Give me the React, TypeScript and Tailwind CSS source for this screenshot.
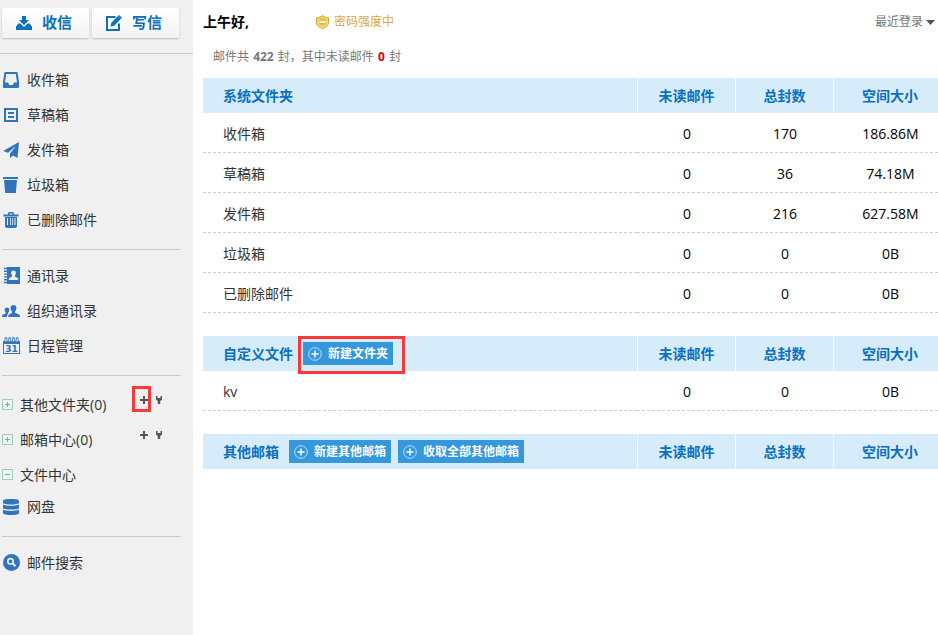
import type { ReactNode } from 'react';

const InboxIcon = () => (
  <svg width="16" height="16" viewBox="0 0 16 16" fill="#2f74bd">
    <path fillRule="evenodd" d="M1.5 0h13L16 10v5a1 1 0 0 1-1 1H1a1 1 0 0 1-1-1v-5zM3.2 2 2 10.5h3l1.2 2.5h3.6l1.2-2.5h3L12.8 2z" />
  </svg>
);

const DraftIcon = () => (
  <svg width="16" height="16" viewBox="0 0 16 16" fill="#2f74bd">
    <path fillRule="evenodd" d="M1 1h14v14H1zM3 3v10h10V3zM5 5h6v2H5zM5 9h6v2H5z" />
  </svg>
);

const SendIcon = () => (
  <svg width="16" height="16" viewBox="0 0 16 16" fill="#2f74bd">
    <path d="M16 0 14.5 16 10 13.4 7 16V11.5L13 4 5 10.8 0 9z" />
  </svg>
);

const JunkIcon = () => (
  <svg width="16" height="16" viewBox="0 0 16 16" fill="#2f74bd">
    <path d="M0 0h15v2H0zM1 3h13L12.8 16H2.2z" />
  </svg>
);

const TrashIcon = () => (
  <svg width="16" height="16" viewBox="0 0 16 16" fill="#2f74bd">
    <path fillRule="evenodd" d="M5 2.5V1.2L6 0h4l1 1.2v1.3h4.5v2H.5v-2zM6.5 2.5h3v-1h-3zM2 4h12v10a2 2 0 0 1-2 2H4a2 2 0 0 1-2-2zM4 6v7h1V6zM7 6v7h.8V6zM9.3 6v7h.8V6zM11.5 6v7h1V6z" />
  </svg>
);

const ContactsIcon = () => (
  <svg width="17" height="17" viewBox="0 0 17 17">
    <path d="M4 0h13v17H4z" fill="#2f74bd" />
    <path d="M1 1.5h4M1 4.3h4M1 7.1h4M1 9.9h4M1 12.700h4M1 15.5h4" stroke="#2f74bd" strokeWidth="1.4" />
    <path d="M10.5 3.5a2.4 2.4 0 0 1 2.4 2.5c0 1-.4 1.9-1 2.5v1l2.8 1.5c.4.3.5.9.5 2H5.800c0-1.1.1-1.700.5-2l2.800-1.500v-1a3.500 3.500 0 0 1-1-2.500 2.400 2.400 0 0 1 2.400-2.500z" fill="#f0f0f0" />
  </svg>
);

const GroupIcon = () => (
  <svg width="18" height="12" viewBox="0 0 18 12" fill="#2f74bd">
    <path d="M11.5 0c1.8 0 2.9 1.2 2.9 3 0 1.5-.6 2.7-1.4 3.4v1.4l4 1.600c.7.4 1 1 1 2.6H6.3c0-1.6.2-2.2.8-2.6L10 7.800V6.4C9.2 5.7 8.6 4.5 8.6 3c0-1.8 1.1-3 2.900-3z" />
    <path d="M5 2.6c1.3 0 2.3.9 2.3 2.3 0 1.2-.5 2-1.1 2.6v1L5.5 9.5c-.4.5-.6 1.4-.6 2.5H0c0-1.4.2-1.9.7-2.2l3-1.3v-1C3.1 6.900 2.7 6 2.7 4.9c0-1.4 1-2.3 2.3-2.3z" />
  </svg>
);

const CalendarIcon = () => (
  <svg width="17" height="17" viewBox="0 0 17 17">
    <path fillRule="evenodd" d="M0 4h17v13H0zM1 7v9h15V7z" fill="#2f74bd" />
    <path d="M3 4V1.6M6.700 4V1.6M10.4 4V1.6M14.1 4V1.6" stroke="#2f74bd" strokeWidth="2.8" strokeLinecap="round" />
    <path d="M3 4.500V1.6M6.7 4.500V1.6M10.4 4.5V1.6M14.1 4.5V1.6" stroke="#f0f0f0" strokeWidth="1.200" />
    <text x="8.5" y="15" textAnchor="middle" fontSize="9" fontWeight="bold" fontFamily="DejaVu Sans, sans-serif" fill="#2f74bd">31</text>
  </svg>
);

const DiskIcon = () => (
  <svg width="16" height="16" viewBox="0 0 16 16" fill="#2f74bd">
    <path d="M0 2C0 .3 4 0 8 0s8 .3 8 2v2c0 .9-4 1.5-8 1.5S0 4.9 0 4z" />
    <path d="M0 5.5c1.5 1 5 1.3 8 1.3s6.5-.3 8-1.3V9c0 1-4 1.6-8 1.6S0 10 0 9z" />
    <path d="M0 10.6c1.5 1 5 1.3 8 1.3s6.5-.3 8-1.3V14c0 1.5-4 2-8 2s-8-.5-8-2z" />
  </svg>
);

const SearchIcon = () => (
  <svg width="17" height="17" viewBox="0 0 17 17">
    <circle cx="8.5" cy="8.5" r="8.5" fill="#2f74bd" />
    <circle cx="7.5" cy="7.3" r="2.7" fill="none" stroke="#f0f0f0" strokeWidth="1.6" />
    <path d="m9.5 9.3 3 3" stroke="#f0f0f0" strokeWidth="2" />
  </svg>
);

const ReceiveIcon = () => (
  <svg width="16" height="14" viewBox="0 0 16 14" fill="#0a70bf">
    <path d="M6 0h4v4h3L8 9 3 4h3z" />
    <path d="M2.5 7.5 0 10.5V14h16v-3.5l-2.5-3h-2L8 11 4.5 7.5z" />
  </svg>
);

const WriteIcon = () => (
  <svg width="16" height="16" viewBox="0 0 16 16">
    <path d="M9.5 2H1v13h12V8.5" fill="none" stroke="#0a70bf" strokeWidth="2" />
    <path d="m4.5 11.5.8-3.700L12 1l3 2.8-6.8 7z" fill="#0a70bf" />
    <path d="m12 1 1-1 3 2.8-1 1z" fill="#0a70bf" />
  </svg>
);

const ShieldIcon = () => (
  <svg width="13" height="14" viewBox="0 0 13 14">
    <path d="M6.5.5C8 1.9 10 2.6 12.5 2.8v5c0 2.8-2.8 4.7-6 5.7-3.2-1-6-2.9-6-5.700v-5C3 2.6 5 1.9 6.5.5z" fill="#f3d96b" stroke="#cba62e" />
    <circle cx="6.5" cy="7" r="3.7" fill="#e6bd45" />
    <path d="M3.5 6h6v2h-6z" fill="#fff" />
  </svg>
);

const CirclePlusIcon = () => (
  <svg width="14" height="14" viewBox="0 0 14 14" fill="none">
    <circle cx="7" cy="7" r="6.3" stroke="#b9dcf5" />
    <path d="M7 3.5v7M3.5 7h7" stroke="#fff" strokeWidth="1.5" />
  </svg>
);

const TreeIcon = ({ open }: { open?: boolean }) => (
  <svg width="11" height="11" viewBox="0 0 11 11" fill="none">
    <path d="M.5.5h10v10H.5z" fill="#edf5f1" stroke="#9ccbb9" />
    <path d={open ? 'M3 5.5h5' : 'M3 5.5h5M5.5 3v5'} stroke="#6fb19a" />
  </svg>
);

const PlusIcon = () => (
  <svg width="8" height="8" viewBox="0 0 8 8">
    <path d="M4 0v8M0 4h8" stroke="#555" strokeWidth="2" />
  </svg>
);

const WrenchIcon = () => (
  <svg width="8" height="8" viewBox="0 0 8 8" fill="#555">
    <path d="M1 0h1.5v2h3V0H7v3.5L5.200 5v3H2.8V5L1 3.5z" />
  </svg>
);

const mailItems = [
  { icon: <InboxIcon />, label: '收件箱' },
  { icon: <DraftIcon />, label: '草稿箱' },
  { icon: <SendIcon />, label: '发件箱' },
  { icon: <JunkIcon />, label: '垃圾箱' },
  { icon: <TrashIcon />, label: '已删除邮件' },
];

const toolItems = [
  { icon: <ContactsIcon />, label: '通讯录' },
  { icon: <GroupIcon />, label: '组织通讯录' },
  { icon: <CalendarIcon />, label: '日程管理' },
];

const folderItems = [
  { label: '其他文件夹(0)', actions: true, marked: true },
  { label: '邮箱中心(0)', actions: true },
  { label: '文件中心', open: true },
];

const systemRows = [
  ['收件箱', '0', '170', '186.86M'],
  ['草稿箱', '0', '36', '74.18M'],
  ['发件箱', '0', '216', '627.58M'],
  ['垃圾箱', '0', '0', '0B'],
  ['已删除邮件', '0', '0', '0B'],
];

const NavItem = ({ icon, label }: { icon: ReactNode; label: string }) => (
  <a href="#" className="flex h-[35px] items-center gap-[7px]">
    <span className="flex w-[18px] justify-center">{icon}</span>
    {label}
  </a>
);

const Divider = () => <hr className="mt-3 mb-2 mr-[13px] border-[#c8c8c8]" />;

const ActionButton = ({ label }: { label: string }) => (
  <button className="flex h-[23px] items-center gap-1.5 bg-[#3598dc] px-[5px] text-xs font-bold text-white">
    <CirclePlusIcon />
    {label}
  </button>
);

const FolderTable = ({ title, actions, rows }: { title: string; actions?: ReactNode; rows: string[][] }) => (
  <table className="mb-[23px] w-full table-fixed border-separate border-spacing-0">
    <thead>
      <tr className="h-[35px] bg-[#d7ecfb] text-[#0a70bf]">
        <th className="p-0 pl-5 text-left">
          <div className="flex items-center gap-[10px]">
            {title}
            {actions}
          </div>
        </th>
        <th className="w-[98px] border-l border-white p-0">未读邮件</th>
        <th className="w-[98px] border-l border-white p-0">总封数</th>
        <th className="w-[105px] border-l border-white p-0 pl-2">空间大小</th>
      </tr>
    </thead>
    <tbody>
      {rows.map(([name, unread, total, size]) => (
        <tr key={name} className="h-10 text-center text-black">
          <td className="border-b border-dashed border-[#ccc] p-0 pt-0.5 pl-5 text-left text-[#333]">{name}</td>
          <td className="border-b border-dashed border-[#ccc] p-0 pt-0.5 pl-0.5">{unread}</td>
          <td className="border-b border-dashed border-[#ccc] p-0 pt-0.5 pl-0.5">{total}</td>
          <td className="border-b border-dashed border-[#ccc] p-0 pt-0.5 pl-2.5">{size}</td>
        </tr>
      ))}
    </tbody>
  </table>
);

const Sidebar = () => (
  <aside className="w-[193px] shrink-0 bg-[#f0f0f0] pt-2">
    <div className="flex gap-[3px] px-0.5 font-bold text-[15px] text-[#0a70bf]">
      <button className="flex h-[30px] w-[87px] items-center gap-2.5 rounded-xs bg-linear-to-b from-white to-[#f2f2f2] pl-3.5 shadow-[0_1px_2px_#bbb]">
        <ReceiveIcon />
        收信
      </button>
      <button className="flex h-[30px] w-[87px] items-center gap-2.5 rounded-xs bg-linear-to-b from-white to-[#f2f2f2] pl-3.5 shadow-[0_1px_2px_#bbb]">
        <WriteIcon />
        写信
      </button>
    </div>
    <hr className="mt-[15px] mb-2 border-[#c8c8c8]" />
    <nav className="pl-0.5">
      {mailItems.map((item) => (
        <NavItem key={item.label} {...item} />
      ))}
      <Divider />
      {toolItems.map((item) => (
        <NavItem key={item.label} {...item} />
      ))}
      <Divider />
      <div className="pt-[3px]">
        {folderItems.map(({ label, actions, marked, open }) => (
          <div key={label} className="flex h-[35px] items-center">
            <a href="#" className="flex flex-1 items-center gap-[7px]">
              <TreeIcon open={open} />
              {label}
            </a>
            {actions && (
              <div className="flex gap-[7px] self-start pt-[9px] pr-[30px]">
                <button aria-label="新建" className="relative">
                  <PlusIcon />
                  {marked && <span className="absolute -top-[10px] -right-[3px] h-[26px] w-[19px] border-3 border-[#fb3838]" />}
                </button>
                <button aria-label="管理">
                  <WrenchIcon />
                </button>
              </div>
            )}
          </div>
        ))}
      </div>
      <a href="#" className="mb-3.5 flex h-[30px] items-center gap-[7px]">
        <span className="flex w-[18px] justify-center"><DiskIcon /></span>
        网盘
      </a>
      <Divider />
      <NavItem icon={<SearchIcon />} label="邮件搜索" />
    </nav>
  </aside>
);

export default function App() {
  return (
    <div className="flex min-h-screen bg-white font-['Open_Sans','Noto_Sans_CJK_SC',sans-serif] text-sm text-[#333]">
      <Sidebar />
      <main className="min-w-0 flex-1 pl-[10px]">
        <header className="flex h-11 items-center">
          <h1 className="w-[113px] font-bold text-black">上午好,</h1>
          <a href="#" className="flex items-center gap-[5px] text-xs text-[#dca63c]">
            <ShieldIcon />
            密码强度中
          </a>
          <button className="ml-auto flex items-center gap-[3px] pr-[3px] text-xs text-[#777]">
            最近登录
            <svg width="9" height="5" viewBox="0 0 9 5" fill="#555">
              <path d="M0 0h9L4.5 5z" />
            </svg>
          </button>
        </header>
        <p className="h-[34px] pt-[5px] pl-[10px] text-xs text-[#777]">
          邮件共 <b className="px-px">422</b> 封，其中未读邮件 <b className="px-px text-[#d90000]">0</b> 封
        </p>
        <FolderTable title="系统文件夹" rows={systemRows} />
        <FolderTable
          title="自定义文件"
          rows={[['kv', '0', '0', '0B']]}
          actions={
            <div className="relative">
              <ActionButton label="新建文件夹" />
              <span className="pointer-events-none absolute -top-1.5 -right-3 -bottom-[9px] -left-[5px] border-3 border-[#fb3838]" />
            </div>
          }
        />
        <FolderTable
          title="其他邮箱"
          rows={[]}
          actions={
            <div className="flex gap-[7px]">
              <ActionButton label="新建其他邮箱" />
              <ActionButton label="收取全部其他邮箱" />
            </div>
          }
        />
      </main>
    </div>
  );
}
